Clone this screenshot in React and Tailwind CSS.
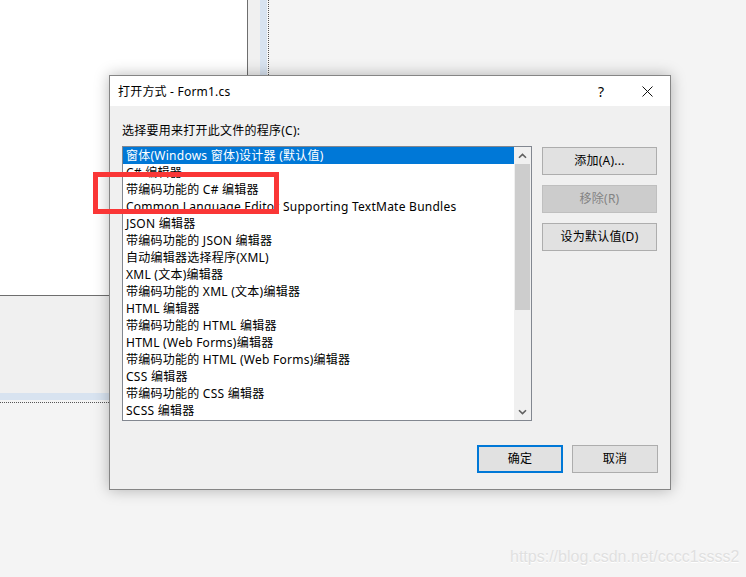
import React from "react";

const items = [
  "窗体(Windows 窗体)设计器 (默认值)",
  "C# 编辑器",
  "带编码功能的 C# 编辑器",
  "Common Language Editor Supporting TextMate Bundles",
  "JSON 编辑器",
  "带编码功能的 JSON 编辑器",
  "自动编辑器选择程序(XML)",
  "XML (文本)编辑器",
  "带编码功能的 XML (文本)编辑器",
  "HTML 编辑器",
  "带编码功能的 HTML 编辑器",
  "HTML (Web Forms)编辑器",
  "带编码功能的 HTML (Web Forms)编辑器",
  "CSS 编辑器",
  "带编码功能的 CSS 编辑器",
  "SCSS 编辑器",
];

function Chevron({ down }) {
  return (
    <svg width="9" height="6" viewBox="0 0 9 6" className="block">
      {down ? (
        <path d="M1 1.2 L4.5 4.6 L8 1.2" fill="none" stroke="#606060" strokeWidth="1.6" />
      ) : (
        <path d="M1 4.8 L4.5 1.4 L8 4.8" fill="none" stroke="#606060" strokeWidth="1.6" />
      )}
    </svg>
  );
}

export default function App() {
  return (
    <div className="relative w-[746px] h-[577px] overflow-hidden bg-[#f4f4f4] font-['Noto_Sans','Noto_Sans_CJK_SC',sans-serif] text-[12px] text-black">
      {/* background designer surface */}
      <div className="w-[269px] h-[403px] border-r border-b border-dotted border-[#555]">
        <div className="w-[267px] h-[400px] border-r-[7px] border-b-[7px] border-[#d8e3f0] bg-[#f0f0f0]">
          <div className="w-[248px] h-[296px] bg-white border-r border-b border-[#6e6e6e]" />
        </div>
      </div>

      {/* dialog */}
      <div className="absolute left-[109px] top-[75px] w-[562px] h-[415px] border border-[#858585] bg-[#f0f0f0] shadow-[0_0_14px_rgba(0,0,0,0.28)] flex flex-col">
        <div className="h-[30px] bg-white flex items-center pl-[8px] pt-[1px] shrink-0">
          <span className="text-[12px] leading-none tracking-[0.2px]">打开方式 - Form1.cs</span>
          <div className="ml-auto flex items-center">
            <span className="w-[46px] text-center text-[14px] leading-none">?</span>
            <span className="w-[46px] flex justify-center">
              <svg width="11" height="11" viewBox="0 0 11 11">
                <path d="M0.5 0.5 L10.5 10.5 M10.5 0.5 L0.5 10.5" stroke="#111" strokeWidth="1" />
              </svg>
            </span>
          </div>
        </div>
        <div className="flex-1 pl-[12px] pr-[12px] pt-[17px] tracking-[0.25px]">
          <div className="h-[16px] leading-[16px] mb-[7px]">选择要用来打开此文件的程序(C):</div>
          <div className="flex gap-[10px]">
            <div className="w-[410px] h-[275px] border border-[#828790] bg-white flex">
              <div className="flex-1 overflow-hidden">
                {items.map((t, i) => (
                  <div
                    key={i}
                    className={
                      "h-[17px] leading-[16px] pt-[1px] pl-[3px] whitespace-nowrap " +
                      (i === 0 ? "bg-[#0078d7] text-white" : "")
                    }
                  >
                    {t}
                  </div>
                ))}
              </div>
              <div className="w-[17px] bg-[#f0f0f0] flex flex-col items-center">
                <div className="h-[17px] flex items-center justify-center">
                  <Chevron />
                </div>
                <div className="w-[15px] h-[146px] bg-[#cdcdcd]" />
                <div className="flex-1" />
                <div className="h-[17px] flex items-center justify-center">
                  <Chevron down />
                </div>
              </div>
            </div>
            <div className="w-[115px] flex flex-col gap-[10px] pt-[1px]">
              <div className="h-[28px] border border-[#adadad] bg-[#e1e1e1] flex items-center justify-center">添加(A)...</div>
              <div className="h-[28px] border border-[#bfbfbf] bg-[#cccccc] text-[#838383] flex items-center justify-center">移除(R)</div>
              <div className="h-[28px] border border-[#adadad] bg-[#e1e1e1] flex items-center justify-center">设为默认值(D)</div>
            </div>
          </div>
          <div className="flex justify-end gap-[9px] mt-[24px]">
            <div className="w-[86px] h-[28px] border-2 border-[#0078d7] bg-[#e1e1e1] flex items-center justify-center">确定</div>
            <div className="w-[86px] h-[28px] border border-[#adadad] bg-[#e1e1e1] flex items-center justify-center">取消</div>
          </div>
        </div>
      </div>

      {/* red annotation box */}
      <div className="absolute left-[93px] top-[172px] w-[186px] h-[42px] border-[5px] border-[#fa3636]" />

      {/* watermark */}
      <div className="absolute left-[510px] top-[547px] text-[16px] leading-[20px] text-[#e0e0e0] font-['Liberation_Sans',Arial,sans-serif] [text-shadow:0_1px_0_#ffffff]">
        https://blog.csdn.net/cccc1ssss2
      </div>
    </div>
  );
}
